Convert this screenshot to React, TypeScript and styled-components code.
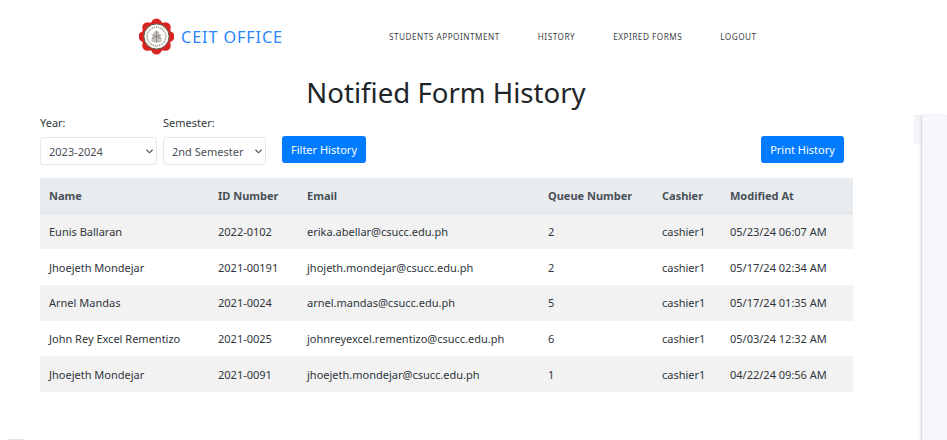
import React from "react";
import styled, { createGlobalStyle } from "styled-components";

const Global = createGlobalStyle`
  html, body { margin: 0; padding: 0; background: #fff; overflow: hidden; }
  body { font-family: "Noto Sans", "Open Sans", sans-serif; color: #212529; }
`;
const Page = styled.div`display: flex; width: 947px; height: 440px; overflow: hidden;`;
const Main = styled.main`width: 914px; flex: none;`;
const Side = styled.aside`flex: 1; margin-top: 115px; display: flex; align-items: flex-start;`;
const SideStrip = styled.div`width: 7px; height: 28px; background: #f5f6fa; border-top: 1px solid #f6eef6;`;
const SidePanel = styled.div`flex: 1; height: 325px; background: #f6f7fc; border-left: 1px solid #dcdce2; box-shadow: -1px 0 2px #e6e6ea; border-top: 1px solid #f6eef6;`;
const Nav = styled.nav`height: 73px; display: flex; align-items: center; padding-left: 139px;`;
const Brand = styled.a`display: flex; align-items: center; gap: 7px; width: 250px; color: #2a85ff; font-size: 16.2px; letter-spacing: .9px;`;
const Links = styled.div`display: flex; gap: 38px;`;
const NavLink = styled.a`font-size: 8.2px; letter-spacing: .5px; color: #3c4147; text-transform: uppercase;`;
const Title = styled.h1`margin: 0; height: 41px; font-size: 27.6px; line-height: 38px; font-weight: 400; text-align: center; width: 892px; color: #212529;`;
const Filters = styled.form`display: flex; align-items: flex-end; padding: 0 70px 0 40px; height: 51px; box-sizing: border-box;`;
const Field = styled.div`display: flex; flex-direction: column; margin-right: 6px;`;
const Label = styled.label`font-size: 11px; line-height: 15px; margin-bottom: 7px; color: #343a40;`;
const SelectBox = styled.div<{ $w: number }>`position: relative; box-sizing: border-box; width: ${p => p.$w}px; height: 28px; border: 1px solid #e6e8eb; border-radius: 3px; font-size: 11px; line-height: 27px; padding-left: 8px; color: #495057; svg { position: absolute; right: 2px; top: 10px; }`;
const Button = styled.button<{ $push?: boolean }>`height: 27px; margin-bottom: 2px; width: ${p => p.$push ? 83 : 84}px; padding: 0; border: 0; border-radius: 3px; background: #007bff; color: #fff; font: 400 11px "Noto Sans", sans-serif; margin-left: ${p => p.$push ? "auto" : "10px"};`;
const Table = styled.table`border-collapse: collapse; table-layout: fixed; width: 813px; margin: 13px 0 0 40px; font-size: 11px; color: #30353b;`;
const Th = styled.th<{ $w: number }>`width: ${p => p.$w}px; height: 35px; padding: 0 0 0 9px; box-sizing: border-box; text-align: left; font-weight: 700; background: #e9ecef; color: #495057; border-bottom: 1px solid #dee2e6;`;
const Tr = styled.tr<{ $odd: boolean }>`background: ${p => p.$odd ? "#f2f2f2" : "#fff"};`;
const Td = styled.td`height: 35.7px; padding: 0 0 0 9px; white-space: nowrap;`;
const FootMark = styled.div`width: 16px; height: 1px; margin: 47px 0 0 8px; background: #e4e4e4;`;

const Seal = () => (
  <svg width="35" height="37" viewBox="0 0 36 38" aria-hidden="true">
    <g fill="#d8231f">
      {[0, 45, 90, 135, 180, 225, 270, 315].map(a => (
        <circle key={a} cx="18" cy="6" r="5.5" transform={`rotate(${a} 18 19)`} />
      ))}
      <circle cx="18" cy="19" r="15.5" />
    </g>
    <circle cx="18" cy="19" r="13" fill="#f6f5f0" stroke="#55504a" strokeWidth="1" />
    <circle cx="18" cy="19" r="9.500" fill="#fff" stroke="#9a968f" strokeWidth="1.4" strokeDasharray="1.2 1" />
    <path d="M12.500 24c2-7 2.500-11 5.500-11s3.500 4 5.500 11c-3 2-8 2-11 0z" fill="#c4c1ba" />
    <path d="M18 13v12M13 17l10 4M23 17l-10 4" stroke="#77736d" strokeWidth=".7" />
  </svg>
);
const Chevron = () => (
  <svg width="9" height="7" viewBox="0 0 10 8" aria-hidden="true">
    <path d="M1.500 2 5 5.500 8.500 2" fill="none" stroke="#495057" strokeWidth="1.3" />
  </svg>
);

const rows = [
  ["Eunis Ballaran", "2022-0102", "erika.abellar@csucc.edu.ph", "2", "cashier1", "05/23/24 06:07 AM"],
  ["Jhoejeth Mondejar", "2021-00191", "jhojeth.mondejar@csucc.edu.ph", "2", "cashier1", "05/17/24 02:34 AM"],
  ["Arnel Mandas", "2021-0024", "arnel.mandas@csucc.edu.ph", "5", "cashier1", "05/17/24 01:35 AM"],
  ["John Rey Excel Rementizo", "2021-0025", "johnreyexcel.rementizo@csucc.edu.ph", "6", "cashier1", "05/03/24 12:32 AM"],
  ["Jhoejeth Mondejar", "2021-0091", "jhoejeth.mondejar@csucc.edu.ph", "1", "cashier1", "04/22/24 09:56 AM"],
];
const heads: [string, number][] = [["Name", 169], ["ID Number", 89], ["Email", 241], ["Queue Number", 114], ["Cashier", 68], ["Modified At", 132]];

export default function App() {
  return (
    <Page>
      <Global />
      <Main>
        <Nav>
          <Brand><Seal />CEIT OFFICE</Brand>
          <Links>
            <NavLink>Students Appointment</NavLink>
            <NavLink>History</NavLink>
            <NavLink>Expired Forms</NavLink>
            <NavLink>Logout</NavLink>
          </Links>
        </Nav>
        <Title>Notified Form History</Title>
        <Filters>
          <Field><Label>Year:</Label><SelectBox $w={117}>2023-2024<Chevron /></SelectBox></Field>
          <Field><Label>Semester:</Label><SelectBox $w={103}>2nd Semester<Chevron /></SelectBox></Field>
          <Button type="button">Filter History</Button>
          <Button type="button" $push>Print History</Button>
        </Filters>
        <Table>
          <thead><tr>{heads.map(([h, w]) => <Th key={h} $w={w}>{h}</Th>)}</tr></thead>
          <tbody>
            {rows.map((r, i) => (
              <Tr key={i} $odd={i % 2 === 0}>{r.map((c, j) => <Td key={j}>{c}</Td>)}</Tr>
            ))}
          </tbody>
        </Table>
        <FootMark />
      </Main>
      <Side><SideStrip /><SidePanel /></Side>
    </Page>
  );
}
